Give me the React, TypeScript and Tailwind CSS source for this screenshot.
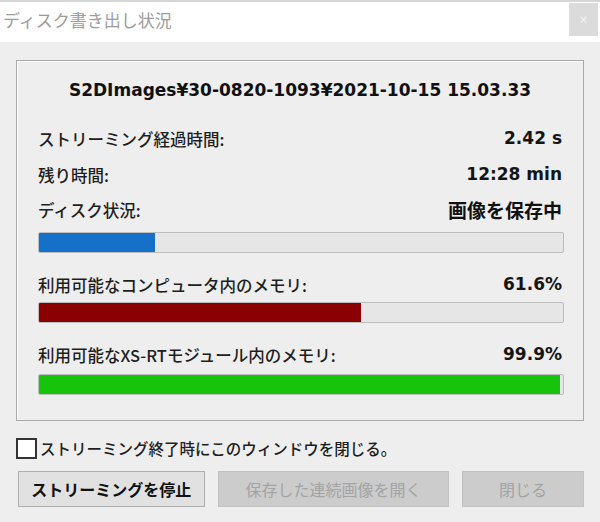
const JP = "font-['Noto_Sans_CJK_JP','Noto_Sans',sans-serif]";
const NUM = "font-['DejaVu_Sans','Noto_Sans_CJK_JP',sans-serif] font-bold";

const rows = [
  { label: "ストリーミング経過時間:", value: "2.42 s" },
  { label: "残り時間:", value: "12:28 min" },
];

function Bar({ pct, color }: { pct: number; color: string }) {
  return (
    <div className="h-[21px] border border-[#bdbdbd] bg-[#e6e6e6] rounded-[2px] overflow-hidden">
      <div className={`h-full ${color}`} style={{ width: `${pct}%` }} />
    </div>
  );
}

function Row({ label, value, big }: { label: string; value: string; big?: boolean }) {
  return (
    <div className="h-[24px] flex items-center justify-between">
      <span className={`${JP} text-[16.5px] font-medium text-[#1e1e1e]`}>{label}</span>
      {big ? (
        <span className={`${JP} text-[19px] font-bold text-[#111]`}>{value}</span>
      ) : (
        <span className={`${NUM} text-[17px] text-[#151515]`}>{value}</span>
      )}
    </div>
  );
}

export default function App() {
  return (
    <div className="w-[600px] h-[522px] bg-[#eeeeee] flex flex-col overflow-hidden">
      <div className="h-[42px] bg-white border-t-2 border-[#d6d6d6] flex justify-between">
        <span className={`${JP} text-[17px] text-[#9c9c9c] pl-[3px] pt-[6px] leading-[24px]`}>
          ディスク書き出し状況
        </span>
        <div className="w-[29px] h-[33px] mt-[1px] mr-[2px] bg-[#dbdbdb] flex items-center justify-center text-[14px] text-[#f4f4f4]">
          ×
        </div>
      </div>

      <div className="px-[16px]">
        <div className="mt-[18px] h-[361px] w-[568px] border border-[#aaaaaa] shadow-[inset_1px_1px_0_#fafafa] px-[21px] flex flex-col">
          <div className={`${NUM} mt-[17px] h-[24px] leading-[24px] text-center text-[17px] text-[#111]`}>
            S2DImages¥30-0820-1093¥2021-10-15 15.03.33
          </div>
          <div className="mt-[25px] flex flex-col gap-[12px]">
            {rows.map((r) => (
              <Row key={r.label} label={r.label} value={r.value} />
            ))}
          </div>
          <div className="mt-[11px]">
            <Row label="ディスク状況:" value="画像を保存中" big />
          </div>
          <div className="mt-[10px] mr-[-2px]">
            <Bar pct={22.2} color="bg-[#1470c8]" />
          </div>
          <div className="mt-[20px]">
            <Row label="利用可能なコンピュータ内のメモリ:" value="61.6%" />
          </div>
          <div className="mt-[5px] mr-[-2px]">
            <Bar pct={61.4} color="bg-[#8b0000]" />
          </div>
          <div className="mt-[20px]">
            <Row label="利用可能なXS-RTモジュール内のメモリ:" value="99.9%" />
          </div>
          <div className="mt-[7px] mr-[-2px]">
            <Bar pct={99.5} color="bg-[#16c40c]" />
          </div>
        </div>

        <label className="mt-[17px] flex items-center gap-[3px] h-[21px]">
          <span className="w-[21px] h-[21px] border-2 border-[#333] bg-white" />
          <span className={`${JP} text-[15.5px] font-medium text-[#1e1e1e]`}>
            ストリーミング終了時にこのウィンドウを閉じる。
          </span>
        </label>

        <div className={`${JP} mt-[12px] ml-[2px] flex gap-[13px] text-[16px]`}>
          <button className="w-[187px] h-[36px] bg-[#e1e1e1] border border-[#adadad] text-[#111] font-bold">
            ストリーミングを停止
          </button>
          <button className="w-[232px] h-[36px] bg-[#cccccc] border border-[#c2c2c2] text-[#a3a3a3]">
            保存した連続画像を開く
          </button>
          <button className="w-[122px] h-[36px] bg-[#cccccc] border border-[#c2c2c2] text-[#a3a3a3]">
            閉じる
          </button>
        </div>
      </div>
    </div>
  );
}
